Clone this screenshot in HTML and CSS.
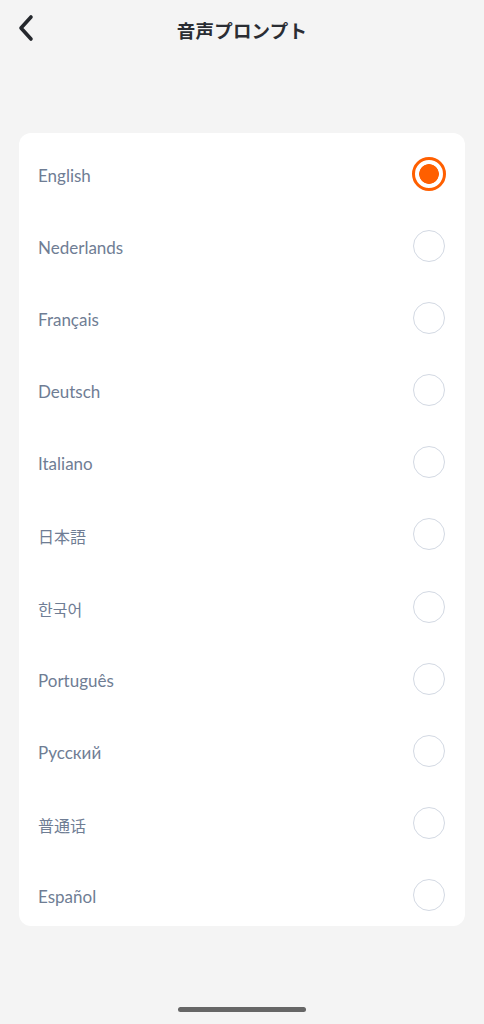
FILE: index.html
```html
<!DOCTYPE html>
<html lang="ja">
<head>
<meta charset="utf-8">
<link rel="stylesheet" href="styles.css">
</head>
<body>
<div class="screen">
  <header class="topbar">
    <button class="back" aria-label="back">
      <svg width="18" height="28" viewBox="0 0 18 28"><path d="M14 3 L4 14 L14 25" fill="none" stroke="#25282d" stroke-width="3.6" stroke-linecap="round" stroke-linejoin="round"/></svg>
    </button>
    <h1 class="title">音声プロンプト</h1>
  </header>
  <ul class="card">
    <li class="row"><span class="label">English</span><span class="radio on"></span></li>
    <li class="row"><span class="label">Nederlands</span><span class="radio"></span></li>
    <li class="row"><span class="label">Français</span><span class="radio"></span></li>
    <li class="row"><span class="label">Deutsch</span><span class="radio"></span></li>
    <li class="row"><span class="label">Italiano</span><span class="radio"></span></li>
    <li class="row"><span class="label cjk">日本語</span><span class="radio"></span></li>
    <li class="row"><span class="label kr">한국어</span><span class="radio"></span></li>
    <li class="row"><span class="label">Português</span><span class="radio"></span></li>
    <li class="row"><span class="label">Русский</span><span class="radio"></span></li>
    <li class="row"><span class="label sc">普通话</span><span class="radio"></span></li>
    <li class="row"><span class="label">Español</span><span class="radio"></span></li>
  </ul>
  <div class="home"></div>
</div>
</body>
</html>
```
FILE: styles.css
```css
* { box-sizing: border-box; }
html, body { margin: 0; padding: 0; }
body {
  background: #f4f4f4;
  font-family: Lato, "Noto Sans CJK JP", sans-serif;
  width: 484px;
  height: 1024px;
  overflow: hidden;
}
.screen {
  display: flex;
  flex-direction: column;
  height: 1024px;
  padding: 0 19px;
}
.topbar {
  position: relative;
  height: 60px;
  display: flex;
  align-items: center;
  justify-content: center;
}
.back {
  position: absolute;
  left: -2px;
  top: 14px;
  border: 0;
  background: none;
  padding: 0;
  width: 18px;
  height: 28px;
}
.back svg { display: block; }
.title {
  margin: 0;
  font-family: "Noto Sans CJK JP", sans-serif;
  font-weight: 700;
  font-size: 18.5px;
  color: #2a2d33;
  letter-spacing: 0.2px;
  margin-top: -1px;
}
.card {
  list-style: none;
  margin: 73px 0 0;
  padding: 0;
  background: #fff;
  border-radius: 12px;
  height: 793px;
}
.row {
  height: 72.1px;
  padding: 10px 20px 0 19px;
  display: flex;
  align-items: flex-start;
  justify-content: space-between;
}
.label {
  font-size: 17px;
  line-height: 62px;
  padding-top: 2px;
  color: #6f7d94;
  font-family: Lato, sans-serif;
}
.label.cjk { font-family: "Noto Sans CJK JP", sans-serif; font-size: 16px; }
.label.kr { font-family: "Noto Sans CJK KR", sans-serif; font-size: 16px; }
.label.sc { font-family: "Noto Sans CJK SC", sans-serif; font-size: 16px; }
.radio {
  margin-top: 15px;
  width: 32px;
  height: 32px;
  border-radius: 50%;
  border: 1.5px solid #d3d9e3;
  flex: none;
}
.radio.on {
  width: 34px;
  height: 34px;
  margin-top: 14px;
  margin-right: -1px;
  border: 3px solid #ff5f00;
  background: radial-gradient(circle, #ff5f00 0 9.5px, #fff 10.2px);
}
.home {
  margin: 81px auto 0;
  width: 128px;
  height: 5px;
  border-radius: 3px;
  background: #666;
}
```
